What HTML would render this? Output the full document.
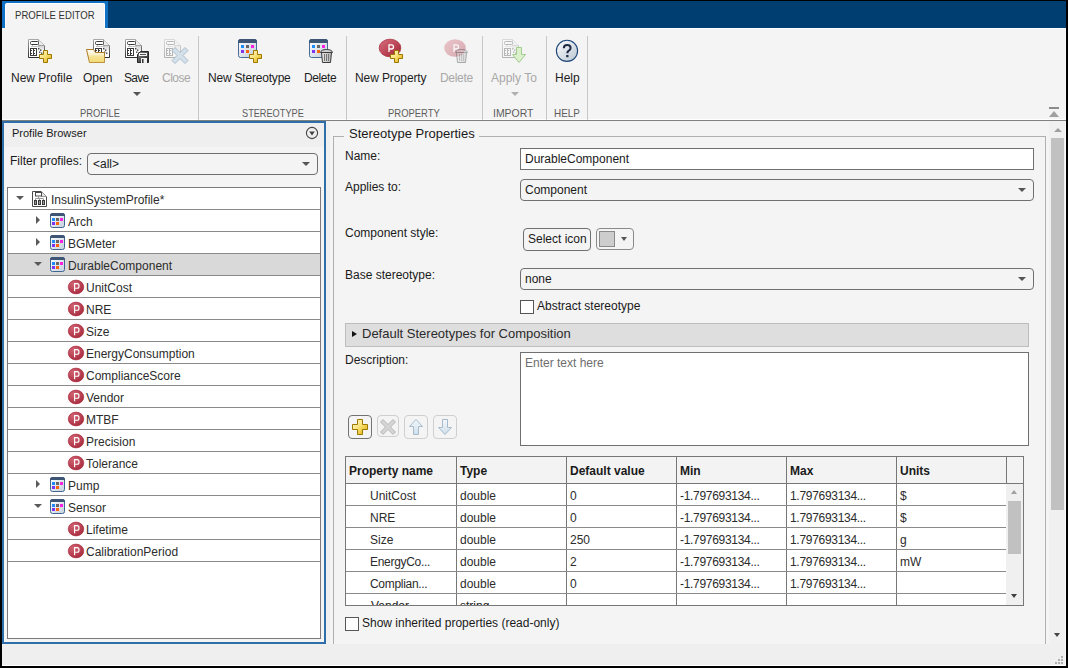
<!DOCTYPE html>
<html><head><meta charset="utf-8">
<style>
*{box-sizing:border-box;margin:0;padding:0}
html,body{width:1068px;height:668px;overflow:hidden;background:#000}
body{position:relative;font-family:"Liberation Sans",sans-serif;font-size:12px;color:#1a1a1a}
.a{position:absolute}
.t{position:absolute;white-space:nowrap;line-height:14px;font-size:12px}
#win{left:2px;top:1px;width:1064px;height:665px;background:#f4f4f4}
#strip{left:2px;top:1px;width:1064px;height:27px;background:#003e72}
#tab{left:2px;top:1px;width:106px;height:27px;background:#1070c4}
#tabin{left:5px;top:3px;width:100px;height:26px;background:#f4f4f4;border-top:1px solid #fff;border-left:1px solid #fff;border-right:1px solid #fff;border-radius:2px 2px 0 0}
.sep{position:absolute;top:36px;width:1px;height:84px;background:#c8c8c8}
.btxt{color:#1e1e1e}
.dis{color:#a8a8a8}
.grp{position:absolute;top:106px;font-size:11px;line-height:14px;color:#5c5c5c;white-space:nowrap}
.ddarr{position:absolute;width:0;height:0;border-left:4px solid transparent;border-right:4px solid transparent;border-top:4px solid #555}
</style></head>
<body>
<div id="win" class="a"></div>
<div id="strip" class="a"></div>
<div id="tab" class="a"></div>
<div id="tabin" class="a"></div>
<div class="a" style="left:105px;top:28px;width:961px;height:1px;background:#fff"></div>
<div class="t" style="left:15px;top:8px;font-size:11px;color:#333;transform:scaleX(0.87);transform-origin:0 0">PROFILE EDITOR</div>

<!-- toolbar -->
<div class="a" style="left:2px;top:119px;width:1064px;height:1px;background:#fff"></div>
<div class="a" style="left:2px;top:120px;width:1064px;height:1px;background:#808080"></div>
<div class="sep" style="left:198px"></div>
<div class="sep" style="left:346px"></div>
<div class="sep" style="left:482px"></div>
<div class="sep" style="left:546px"></div>
<div class="sep" style="left:587px"></div>

<div class="t btxt" style="left:11px;top:71px">New Profile</div>
<div class="t btxt" style="left:83px;top:71px">Open</div>
<div class="t btxt" style="left:124px;top:71px;letter-spacing:-0.7px">Save</div>
<div class="t dis" style="left:162px;top:71px;letter-spacing:-0.5px">Close</div>
<div class="t btxt" style="left:208px;top:71px;letter-spacing:-0.2px">New Stereotype</div>
<div class="t btxt" style="left:304px;top:71px;letter-spacing:-0.4px">Delete</div>
<div class="t btxt" style="left:355px;top:71px;letter-spacing:-0.1px">New Property</div>
<div class="t dis" style="left:440px;top:71px;letter-spacing:-0.3px">Delete</div>
<div class="t dis" style="left:491px;top:71px">Apply To</div>
<div class="t btxt" style="left:555px;top:71px">Help</div>
<div class="ddarr" style="left:133px;top:92px"></div>
<div class="ddarr" style="left:511px;top:92px;border-top-color:#b0b0b0"></div>

<div class="grp" style="left:80px;transform:scaleX(0.85);transform-origin:0 0">PROFILE</div>
<div class="grp" style="left:242px;transform:scaleX(0.835);transform-origin:0 0">STEREOTYPE</div>
<div class="grp" style="left:388px;transform:scaleX(0.86);transform-origin:0 0">PROPERTY</div>
<div class="grp" style="left:493px;transform:scaleX(0.95);transform-origin:0 0">IMPORT</div>
<div class="grp" style="left:554px;transform:scaleX(0.9);transform-origin:0 0">HELP</div>

<svg class="a" style="left:0;top:0" width="600" height="120" viewBox="0 0 600 120">
<defs>
<linearGradient id="gplus" x1="0" y1="0" x2="1" y2="1"><stop offset="0" stop-color="#fffbe0"/><stop offset="0.5" stop-color="#f8e070"/><stop offset="1" stop-color="#d8a800"/></linearGradient>
<linearGradient id="gdocb" x1="0" y1="0" x2="0" y2="1"><stop offset="0" stop-color="#a8a8a8"/><stop offset="1" stop-color="#303030"/></linearGradient>
<linearGradient id="gfold" x1="0" y1="0" x2="0" y2="1"><stop offset="0" stop-color="#ffffff"/><stop offset="1" stop-color="#f0d870"/></linearGradient>
<linearGradient id="gwin" x1="0" y1="0" x2="1" y2="1"><stop offset="0" stop-color="#ffffff"/><stop offset="1" stop-color="#c0ccd8"/></linearGradient>
<linearGradient id="gred" x1="0" y1="0" x2="1" y2="1"><stop offset="0" stop-color="#d87080"/><stop offset="1" stop-color="#a02032"/></linearGradient>
<linearGradient id="ghelp" x1="0" y1="0" x2="1" y2="1"><stop offset="0" stop-color="#ffffff"/><stop offset="1" stop-color="#b8c4d0"/></linearGradient>
<linearGradient id="gtrash" x1="0" y1="0" x2="1" y2="0"><stop offset="0" stop-color="#e8e8e8"/><stop offset="1" stop-color="#b0b0b0"/></linearGradient>
<g id="doc">
 <linearGradient id="gshade" x1="0" y1="0" x2="0" y2="1"><stop offset="0" stop-color="#d4d4d4"/><stop offset="1" stop-color="#ffffff"/></linearGradient>
 <path d="M0.5,0.5H10.5L16.5,6.5V18.5H0.5Z" fill="#fff" stroke="url(#gdocb)"/>
 <rect x="10" y="7" width="6" height="6" fill="url(#gshade)"/>
 <path d="M10.5,0.5V6.5H16.5" fill="#ececec" stroke="#a0a0a0"/>
 <rect x="2.5" y="2.5" width="8" height="3" rx="1" fill="#fff" stroke="#3a3a3a"/>
 <path d="M4.5,6V7.5M3,7.5H12" fill="none" stroke="#c4c4c4"/>
 <rect x="2" y="9" width="7" height="8" fill="#3a3a3a"/>
 <rect x="3" y="10" width="2" height="6" fill="#fff"/><rect x="6" y="10" width="2" height="6" fill="#fff"/>
 <rect x="3" y="11" width="1" height="1" fill="#3a3a3a"/><rect x="3" y="14" width="1" height="1" fill="#3a3a3a"/><rect x="6" y="11" width="1" height="1" fill="#3a3a3a"/><rect x="6" y="14" width="1" height="1" fill="#3a3a3a"/>
 <rect x="10" y="9" width="1.4" height="1.4" fill="#444"/><rect x="12" y="10.5" width="1.4" height="1.4" fill="#444"/><rect x="11" y="12.5" width="1.4" height="1.4" fill="#444"/><rect x="13" y="13.5" width="1.4" height="1.4" fill="#444"/>
</g>
<g id="plus"><path d="M4.5,0.5H8.5V4.5H12.5V8.5H8.5V12.5H4.5V8.5H0.5V4.5H4.5Z" fill="url(#gplus)" stroke="#9c7800"/></g>
<g id="stwin">
 <rect x="0.5" y="0.5" width="18" height="18" rx="2" fill="url(#gwin)" stroke="#4a6c94"/>
 <path d="M0,2.5Q0,0 2.5,0H16.5Q19,0 19,2.5V4H0Z" fill="#3e5676"/>
 <rect x="3" y="6" width="3" height="3" fill="#1e8cf8"/><rect x="8" y="6" width="3" height="3" fill="#666"/><rect x="13" y="6" width="3" height="3" fill="#f820e0"/>
 <rect x="3" y="11" width="3" height="3" fill="#8034f0"/><rect x="8" y="11" width="3" height="3" fill="#ff6408"/>
</g>
<g id="trash">
 <path d="M1.5,3.5H11.5L10.5,13.5H2.5Z" fill="url(#gtrash)" stroke="#3c3c3c"/>
 <path d="M0.5,3.5Q1,0.5 6.5,0.5Q12,0.5 12.5,3.5Z" fill="#d0d0d0" stroke="#3c3c3c"/>
 <path d="M4.5,5V12M6.5,5V12M8.5,5V12" stroke="#777"/>
</g>
</defs>
<!-- New Profile -->
<use href="#doc" x="28" y="39"/><use href="#plus" x="39" y="50"/>
<!-- Open -->
<use href="#doc" x="93" y="39"/>
<path d="M86.5,49.5H93.5L95.5,52.5H104.5V62.5H89.5Z" fill="url(#gfold)" stroke="#b07c28"/>
<path d="M89.5,55.5H104.5V62.5H89.5Z" fill="#f4dc78" opacity="0.5"/>
<!-- Save -->
<use href="#doc" x="125" y="39"/>
<linearGradient id="gflop" x1="0" y1="0" x2="1" y2="1"><stop offset="0" stop-color="#8a8a8a"/><stop offset="1" stop-color="#1e1e1e"/></linearGradient>
<path d="M137.5,54.5L140.5,51.5H148.5V62.5H137.5Z" fill="url(#gflop)" stroke="#262626"/>
<rect x="139" y="53" width="8" height="3" fill="#f4f4f4"/><rect x="140" y="54" width="6" height="1" fill="#555"/>
<rect x="141" y="58" width="6" height="5" fill="#f0f0f0"/><rect x="142" y="59" width="1.5" height="4" fill="#333"/>
<!-- Close (disabled) -->
<g opacity="0.33"><use href="#doc" x="164" y="39"/></g>
<path d="M172,50.5L175,47.5L180,52.5L185,47.5L188,50.5L183,55.5L188,60.5L185,63.5L180,58.5L175,63.5L172,60.5L177,55.5Z" fill="#d4e0ea" stroke="#a8bccc"/>
<!-- New Stereotype -->
<use href="#stwin" x="238" y="39"/><use href="#plus" x="249" y="50"/>
<!-- Delete stereotype -->
<use href="#stwin" x="309" y="39"/><use href="#trash" x="320" y="49"/>
<!-- New Property -->
<ellipse cx="390" cy="48" rx="10.8" ry="8.8" fill="url(#gred)" stroke="#a83040" stroke-width="0.8"/>
<path d="M389,52V44.8H391.5Q393.5,44.8 393.5,46.9Q393.5,49 391.5,49H389" fill="none" stroke="#fff" stroke-width="1.3"/>
<use href="#plus" x="390" y="50"/>
<!-- Delete property (disabled) -->
<g opacity="0.35">
<ellipse cx="455" cy="48" rx="10.8" ry="8.8" fill="url(#gred)"/>
<path d="M454,52V44.8H456.5Q458.5,44.8 458.5,46.9Q458.5,49 456.5,49H454" fill="none" stroke="#fff" stroke-width="1.3"/>
</g>
<g opacity="0.4"><use href="#trash" x="455" y="49"/></g>
<!-- Apply To -->
<g opacity="0.33"><use href="#doc" x="502" y="39"/></g>
<path d="M516.5,47.5H521.5V54.5H525.5L519,62.5L512.5,54.5H516.5Z" fill="#dcf0cc" stroke="#a0cc90"/>
<!-- Help -->
<circle cx="567" cy="50.8" r="10.6" fill="url(#ghelp)" stroke="#1c4478" stroke-width="1.1"/>
<path d="M563.8,48.3Q563.8,45 567.2,45Q570.6,45 570.6,47.9Q570.6,49.7 568.6,50.8Q567.3,51.6 567.3,53.2" fill="none" stroke="#1e2a44" stroke-width="2"/>
<rect x="566.2" y="55" width="2.3" height="2.2" fill="#1e2a44"/>
</svg>
<!-- toolstrip collapse icon -->
<div class="a" style="left:1049px;top:107px;width:10px;height:2px;background:#8c8c8c"></div>
<div class="a" style="left:1049px;top:111px;width:0;height:0;border-left:5px solid transparent;border-right:5px solid transparent;border-bottom:6px solid #a0a0a0"></div>
<!--LEFT-->
<div class="a" style="left:2px;top:121px;width:324px;height:523px;border:2px solid #2e6fab;background:#f4f4f4"></div>
<div class="a" style="left:4px;top:123px;width:320px;height:24px;background:#efefef"></div>
<div class="t" style="left:12px;top:126px;font-size:11px;color:#1a1a1a">Profile Browser</div>
<svg class="a" style="left:305px;top:126px" width="14" height="14" viewBox="0 0 14 14"><circle cx="7" cy="7" r="5.6" fill="none" stroke="#444" stroke-width="1.1"/><path d="M4.2,5.4H9.8L7,9.4Z" fill="#444"/></svg>
<div class="t" style="left:10px;top:154px">Filter profiles:</div>
<div class="a" style="left:87px;top:153px;width:231px;height:22px;border:1px solid #6e6e6e;border-radius:4px;background:#f4f4f4"></div>
<div class="t" style="left:93px;top:157px">&lt;all&gt;</div>
<div class="ddarr" style="left:302px;top:162px"></div>
<div class="a" style="left:7px;top:187px;width:314px;height:452px;border:1px solid #7a7a7a;background:#fff"></div>
<svg class="a" style="left:0;top:180px" width="330" height="400" viewBox="0 180 330 400">
<defs>
<linearGradient id="gwin2" x1="0" y1="0" x2="1" y2="1"><stop offset="0" stop-color="#ffffff"/><stop offset="1" stop-color="#c4d0dc"/></linearGradient>
<radialGradient id="gp" cx="0.35" cy="0.3" r="0.8"><stop offset="0" stop-color="#d26474"/><stop offset="1" stop-color="#a5283a"/></radialGradient>
<g id="tst"><rect x="0.5" y="0.5" width="14" height="14" rx="2" fill="url(#gwin2)" stroke="#3f6590"/><path d="M0,2.5Q0,0 2.5,0H12.5Q15,0 15,2.5V3H0Z" fill="#3e5676"/>
<rect x="2" y="5" width="3" height="3" fill="#1e8cf8"/><rect x="6" y="5" width="3" height="3" fill="#666"/><rect x="10" y="5" width="3" height="3" fill="#f820e0"/>
<rect x="2" y="9" width="3" height="3" fill="#8034f0"/><rect x="6" y="9" width="3" height="3" fill="#ff6408"/></g>
<g id="tp"><ellipse cx="8" cy="7" rx="7.8" ry="6.9" fill="url(#gp)" stroke="#a8283a" stroke-width="0.6"/><path d="M6.6,11.2V3.6H9.2Q11,3.6 11,5.9Q11,8.2 9.2,8.2H6.6" fill="none" stroke="#fff" stroke-width="1.15"/></g>
<g id="tprof"><path d="M0.5,0.5H9.5L14.5,5.5V15.5H0.5Z" fill="#fff" stroke="#4a4a4a"/><path d="M9.5,0.5V5.5H14.5" fill="#e2e2e2" stroke="#9a9a9a"/>
<rect x="3.5" y="1.5" width="6" height="3.5" fill="#fff" stroke="#4a4a4a"/><path d="M6.5,5V7.5M3.5,9V7.5H11.5V9M7.5,7.5V9" fill="none" stroke="#9a9a9a"/>
<rect x="2" y="9" width="3" height="5" fill="#3a3a3a"/><rect x="6" y="9" width="3" height="5" fill="#3a3a3a"/><rect x="10" y="9" width="3" height="5" fill="#3a3a3a"/>
<rect x="3" y="10" width="1" height="3" fill="#9a9a9a"/><rect x="7" y="10" width="1" height="3" fill="#9a9a9a"/><rect x="11" y="10" width="1" height="3" fill="#9a9a9a"/></g>
</defs>
<rect x="8" y="209" width="312" height="1" fill="#8a8a8a"/>
<path d="M16,196H24L20,200Z" fill="#595959"/>
<use href="#tprof" x="32" y="191"/>
<rect x="8" y="231" width="312" height="1" fill="#8a8a8a"/>
<path d="M36,216V224L40,220Z" fill="#595959"/>
<use href="#tst" x="50" y="213"/>
<rect x="8" y="253" width="312" height="1" fill="#8a8a8a"/>
<path d="M36,238V246L40,242Z" fill="#595959"/>
<use href="#tst" x="50" y="235"/>
<rect x="8" y="254" width="312" height="21" fill="#d9d9d9"/>
<rect x="8" y="275" width="312" height="1" fill="#8a8a8a"/>
<path d="M34,262H42L38,266Z" fill="#595959"/>
<use href="#tst" x="50" y="257"/>
<rect x="8" y="297" width="312" height="1" fill="#8a8a8a"/>
<use href="#tp" x="68" y="280"/>
<rect x="8" y="319" width="312" height="1" fill="#8a8a8a"/>
<use href="#tp" x="68" y="302"/>
<rect x="8" y="341" width="312" height="1" fill="#8a8a8a"/>
<use href="#tp" x="68" y="324"/>
<rect x="8" y="363" width="312" height="1" fill="#8a8a8a"/>
<use href="#tp" x="68" y="346"/>
<rect x="8" y="385" width="312" height="1" fill="#8a8a8a"/>
<use href="#tp" x="68" y="368"/>
<rect x="8" y="407" width="312" height="1" fill="#8a8a8a"/>
<use href="#tp" x="68" y="390"/>
<rect x="8" y="429" width="312" height="1" fill="#8a8a8a"/>
<use href="#tp" x="68" y="412"/>
<rect x="8" y="451" width="312" height="1" fill="#8a8a8a"/>
<use href="#tp" x="68" y="434"/>
<rect x="8" y="473" width="312" height="1" fill="#8a8a8a"/>
<use href="#tp" x="68" y="456"/>
<rect x="8" y="495" width="312" height="1" fill="#8a8a8a"/>
<path d="M36,480V488L40,484Z" fill="#595959"/>
<use href="#tst" x="50" y="477"/>
<rect x="8" y="517" width="312" height="1" fill="#8a8a8a"/>
<path d="M34,504H42L38,508Z" fill="#595959"/>
<use href="#tst" x="50" y="499"/>
<rect x="8" y="539" width="312" height="1" fill="#8a8a8a"/>
<use href="#tp" x="68" y="522"/>
<rect x="8" y="561" width="312" height="1" fill="#8a8a8a"/>
<use href="#tp" x="68" y="544"/>
</svg>
<div class="t" style="left:51px;top:193px;color:#2c2c2c">InsulinSystemProfile*</div>
<div class="t" style="left:68px;top:215px;color:#2c2c2c">Arch</div>
<div class="t" style="left:68px;top:237px;color:#2c2c2c">BGMeter</div>
<div class="t" style="left:68px;top:259px;color:#2c2c2c">DurableComponent</div>
<div class="t" style="left:86px;top:281px;color:#2c2c2c">UnitCost</div>
<div class="t" style="left:86px;top:303px;color:#2c2c2c">NRE</div>
<div class="t" style="left:86px;top:325px;color:#2c2c2c">Size</div>
<div class="t" style="left:86px;top:347px;color:#2c2c2c">EnergyConsumption</div>
<div class="t" style="left:86px;top:369px;color:#2c2c2c">ComplianceScore</div>
<div class="t" style="left:86px;top:391px;color:#2c2c2c">Vendor</div>
<div class="t" style="left:86px;top:413px;color:#2c2c2c">MTBF</div>
<div class="t" style="left:86px;top:435px;color:#2c2c2c">Precision</div>
<div class="t" style="left:86px;top:457px;color:#2c2c2c">Tolerance</div>
<div class="t" style="left:68px;top:479px;color:#2c2c2c">Pump</div>
<div class="t" style="left:68px;top:501px;color:#2c2c2c">Sensor</div>
<div class="t" style="left:86px;top:523px;color:#2c2c2c">Lifetime</div>
<div class="t" style="left:86px;top:545px;color:#2c2c2c">CalibrationPeriod</div>
<!--/LEFT-->
<!--RIGHT-->
<div class="a" style="left:326px;top:121px;width:4px;height:523px;background:#f0f0f0"></div>
<div class="a" style="left:2px;top:644px;width:1064px;height:22px;background:#efefef"></div>
<div class="a" style="left:2px;top:665px;width:1064px;height:1px;background:#fff"></div>
<div class="a" style="left:1065px;top:29px;width:1px;height:91px;background:#fafafa"></div>
<div class="a" style="left:1065px;top:121px;width:1px;height:545px;background:#fafafa"></div>
<div class="a" style="left:1061px;top:656px;width:2px;height:2px;background:#b0b0b0"></div>
<div class="a" style="left:1058px;top:659px;width:2px;height:2px;background:#b0b0b0"></div>
<div class="a" style="left:1061px;top:659px;width:2px;height:2px;background:#b0b0b0"></div>
<div class="a" style="left:1055px;top:662px;width:2px;height:2px;background:#b0b0b0"></div>
<div class="a" style="left:1058px;top:662px;width:2px;height:2px;background:#b0b0b0"></div>
<div class="a" style="left:1061px;top:662px;width:2px;height:2px;background:#b0b0b0"></div>
<div class="a" style="left:333px;top:136px;width:1px;height:508px;background:#b0b0b0"></div>
<div class="a" style="left:1045px;top:136px;width:1px;height:508px;background:#b0b0b0"></div>
<div class="a" style="left:333px;top:136px;width:11px;height:1px;background:#b0b0b0"></div>
<div class="a" style="left:479px;top:136px;width:567px;height:1px;background:#b0b0b0"></div>
<div class="t" style="left:349px;top:127px;font-size:13px;color:#1a1a1a">Stereotype Properties</div>
<div class="t" style="left:345px;top:149px">Name:</div>
<div class="t" style="left:345px;top:180px">Applies to:</div>
<div class="t" style="left:345px;top:226px">Component style:</div>
<div class="t" style="left:345px;top:268px">Base stereotype:</div>
<div class="t" style="left:345px;top:353px">Description:</div>
<div class="a" style="left:520px;top:148px;width:514px;height:22px;border:1px solid #707070;background:#fff"></div>
<div class="t" style="left:525px;top:152px">DurableComponent</div>
<div class="a" style="left:520px;top:179px;width:514px;height:22px;border:1px solid #707070;border-radius:4px;background:#f4f4f4"></div>
<div class="t" style="left:525px;top:183px">Component</div>
<div class="ddarr" style="left:1018px;top:188px"></div>
<div class="a" style="left:523px;top:228px;width:68px;height:23px;border:1px solid #707070;border-radius:4px;background:#f4f4f4"></div>
<div class="t" style="left:528px;top:232px">Select icon</div>
<div class="a" style="left:596px;top:228px;width:38px;height:22px;border:1px solid #8a8a8a;border-radius:4px;background:#f4f4f4"></div>
<div class="a" style="left:599px;top:231px;width:16px;height:16px;border:1px solid #8a8a8a;background:#cdcdcd"></div>
<div class="ddarr" style="left:621px;top:237px;border-left-width:3.5px;border-right-width:3.5px"></div>
<div class="a" style="left:520px;top:268px;width:514px;height:22px;border:1px solid #707070;border-radius:4px;background:#f4f4f4"></div>
<div class="t" style="left:525px;top:272px">none</div>
<div class="ddarr" style="left:1018px;top:277px"></div>
<div class="a" style="left:520px;top:300px;width:14px;height:14px;border:1px solid #555;background:#fff"></div>
<div class="t" style="left:537px;top:299px">Abstract stereotype</div>
<div class="a" style="left:345px;top:323px;width:684px;height:24px;border:1px solid #bdbdbd;background:#dedede"></div>
<div class="a" style="left:352px;top:331px;width:0;height:0;border-top:3.5px solid transparent;border-bottom:3.5px solid transparent;border-left:5px solid #111"></div>
<div class="t" style="left:362px;top:327px;font-size:13px;color:#2a2a2a">Default Stereotypes for Composition</div>
<div class="a" style="left:520px;top:352px;width:509px;height:94px;border:1px solid #707070;background:#fff"></div>
<div class="t" style="left:525px;top:356px;color:#6e6e6e">Enter text here</div>
<div class="a" style="left:348px;top:415px;width:24px;height:24px;border:1px solid #737373;border-radius:4px;background:#f4f4f4"></div>
<div class="a" style="left:377px;top:415px;width:22px;height:22px;border:1px solid #cfcfcf;border-radius:4px;background:#f4f4f4"></div>
<div class="a" style="left:404px;top:415px;width:24px;height:24px;border:1px solid #cfcfcf;border-radius:4px;background:#f4f4f4"></div>
<div class="a" style="left:433px;top:415px;width:24px;height:24px;border:1px solid #cfcfcf;border-radius:4px;background:#f4f4f4"></div>
<svg class="a" style="left:340px;top:410px" width="130" height="34" viewBox="340 410 130 34">
<defs><linearGradient id="gplus2" x1="0" y1="0" x2="1" y2="1"><stop offset="0" stop-color="#fffbe0"/><stop offset="0.5" stop-color="#f8e070"/><stop offset="1" stop-color="#d8a800"/></linearGradient>
<linearGradient id="garr" x1="0" y1="0" x2="0" y2="1"><stop offset="0" stop-color="#f4f8fc"/><stop offset="1" stop-color="#cfdeea"/></linearGradient></defs>
<path d="M357.5,419.5H362.5V424.5H367.5V429.5H362.5V434.5H357.5V429.5H352.5V424.5H357.5Z" fill="url(#gplus2)" stroke="#9c7800"/>
<path d="M380.5,422L383,419.5L388,424.5L393,419.5L395.5,422L390.5,427L395.5,432L393,434.5L388,429.5L383,434.5L380.5,432L385.5,427Z" fill="#d4d4d4" stroke="#b8b8b8"/>
<path d="M416,419.5L422.5,426.5H418.5V434.5H413.5V426.5H409.5Z" fill="url(#garr)" stroke="#a6bccd"/>
<path d="M442.5,419.5H447.5V427.5H451.5L445,434.5L438.5,427.5H442.5Z" fill="url(#garr)" stroke="#a6bccd"/>
</svg>
<div class="a" style="left:345px;top:456px;width:679px;height:150px;border:1px solid #777;background:#fff;overflow:hidden"></div>
<div class="a" style="left:346px;top:457px;width:677px;height:26px;background:#f3f3f3"></div>
<div class="a" style="left:346px;top:483px;width:677px;height:1px;background:#777"></div>
<div class="a" style="left:456px;top:456px;width:1px;height:149px;background:#777"></div>
<div class="a" style="left:566px;top:456px;width:1px;height:149px;background:#777"></div>
<div class="a" style="left:676px;top:456px;width:1px;height:149px;background:#777"></div>
<div class="a" style="left:786px;top:456px;width:1px;height:149px;background:#777"></div>
<div class="a" style="left:896px;top:456px;width:1px;height:149px;background:#777"></div>
<div class="a" style="left:1006px;top:456px;width:1px;height:27px;background:#777"></div>
<div class="a" style="left:346px;top:505px;width:660px;height:1px;background:#8a8a8a"></div>
<div class="a" style="left:346px;top:527px;width:660px;height:1px;background:#8a8a8a"></div>
<div class="a" style="left:346px;top:549px;width:660px;height:1px;background:#8a8a8a"></div>
<div class="a" style="left:346px;top:571px;width:660px;height:1px;background:#8a8a8a"></div>
<div class="a" style="left:346px;top:593px;width:660px;height:1px;background:#8a8a8a"></div>
<div class="t" style="left:349px;top:464px;font-weight:bold;color:#1a1a1a">Property name</div>
<div class="t" style="left:460px;top:464px;font-weight:bold;color:#1a1a1a">Type</div>
<div class="t" style="left:570px;top:464px;font-weight:bold;color:#1a1a1a">Default value</div>
<div class="t" style="left:680px;top:464px;font-weight:bold;color:#1a1a1a">Min</div>
<div class="t" style="left:790px;top:464px;font-weight:bold;color:#1a1a1a">Max</div>
<div class="t" style="left:900px;top:464px;font-weight:bold;color:#1a1a1a">Units</div>
<div class="t" style="left:370px;top:489px;color:#2c2c2c">UnitCost</div>
<div class="t" style="left:460px;top:489px;color:#2c2c2c">double</div>
<div class="t" style="left:570px;top:489px;color:#2c2c2c">0</div>
<div class="t" style="left:680px;top:489px;color:#2c2c2c;letter-spacing:-0.3px">-1.797693134...</div>
<div class="t" style="left:790px;top:489px;color:#2c2c2c;letter-spacing:-0.3px">1.797693134...</div>
<div class="t" style="left:900px;top:489px;color:#2c2c2c">$</div>
<div class="t" style="left:370px;top:511px;color:#2c2c2c">NRE</div>
<div class="t" style="left:460px;top:511px;color:#2c2c2c">double</div>
<div class="t" style="left:570px;top:511px;color:#2c2c2c">0</div>
<div class="t" style="left:680px;top:511px;color:#2c2c2c;letter-spacing:-0.3px">-1.797693134...</div>
<div class="t" style="left:790px;top:511px;color:#2c2c2c;letter-spacing:-0.3px">1.797693134...</div>
<div class="t" style="left:900px;top:511px;color:#2c2c2c">$</div>
<div class="t" style="left:370px;top:533px;color:#2c2c2c">Size</div>
<div class="t" style="left:460px;top:533px;color:#2c2c2c">double</div>
<div class="t" style="left:570px;top:533px;color:#2c2c2c">250</div>
<div class="t" style="left:680px;top:533px;color:#2c2c2c;letter-spacing:-0.3px">-1.797693134...</div>
<div class="t" style="left:790px;top:533px;color:#2c2c2c;letter-spacing:-0.3px">1.797693134...</div>
<div class="t" style="left:900px;top:533px;color:#2c2c2c">g</div>
<div class="t" style="left:370px;top:555px;color:#2c2c2c;letter-spacing:-0.3px">EnergyCo...</div>
<div class="t" style="left:460px;top:555px;color:#2c2c2c">double</div>
<div class="t" style="left:570px;top:555px;color:#2c2c2c">2</div>
<div class="t" style="left:680px;top:555px;color:#2c2c2c;letter-spacing:-0.3px">-1.797693134...</div>
<div class="t" style="left:790px;top:555px;color:#2c2c2c;letter-spacing:-0.3px">1.797693134...</div>
<div class="t" style="left:900px;top:555px;color:#2c2c2c">mW</div>
<div class="t" style="left:370px;top:577px;color:#2c2c2c;letter-spacing:-0.3px">Complian...</div>
<div class="t" style="left:460px;top:577px;color:#2c2c2c">double</div>
<div class="t" style="left:570px;top:577px;color:#2c2c2c">0</div>
<div class="t" style="left:680px;top:577px;color:#2c2c2c;letter-spacing:-0.3px">-1.797693134...</div>
<div class="t" style="left:790px;top:577px;color:#2c2c2c;letter-spacing:-0.3px">1.797693134...</div>
<div class="t" style="left:900px;top:577px;color:#2c2c2c"></div>
<div class="a" style="left:346px;top:594px;width:660px;height:11px;overflow:hidden"><div class="t" style="left:25px;top:5px">Vendor</div><div class="t" style="left:114px;top:5px">string</div></div>
<div class="a" style="left:1006px;top:484px;width:17px;height:121px;background:#f0f0f0"></div>
<div class="a" style="left:1008px;top:501px;width:13px;height:53px;background:#c1c1c1"></div>
<div class="a" style="left:1011px;top:490px;width:0;height:0;border-left:3.5px solid transparent;border-right:3.5px solid transparent;border-bottom:4px solid #a0a0a0"></div>
<div class="a" style="left:1011px;top:594px;width:0;height:0;border-left:3.5px solid transparent;border-right:3.5px solid transparent;border-top:4px solid #404040"></div>
<div class="a" style="left:345px;top:617px;width:14px;height:14px;border:1px solid #555;background:#fff"></div>
<div class="t" style="left:362px;top:616px">Show inherited properties (read-only)</div>
<div class="a" style="left:1049px;top:121px;width:16px;height:523px;background:#f0f0f0"></div>
<div class="a" style="left:1051px;top:138px;width:13px;height:372px;background:#c1c1c1"></div>
<div class="a" style="left:1054px;top:128px;width:0;height:0;border-left:4px solid transparent;border-right:4px solid transparent;border-bottom:4px solid #a0a0a0"></div>
<div class="a" style="left:1054px;top:633px;width:0;height:0;border-left:3.5px solid transparent;border-right:3.5px solid transparent;border-top:4px solid #444"></div>
<!--/RIGHT-->
</body></html>
